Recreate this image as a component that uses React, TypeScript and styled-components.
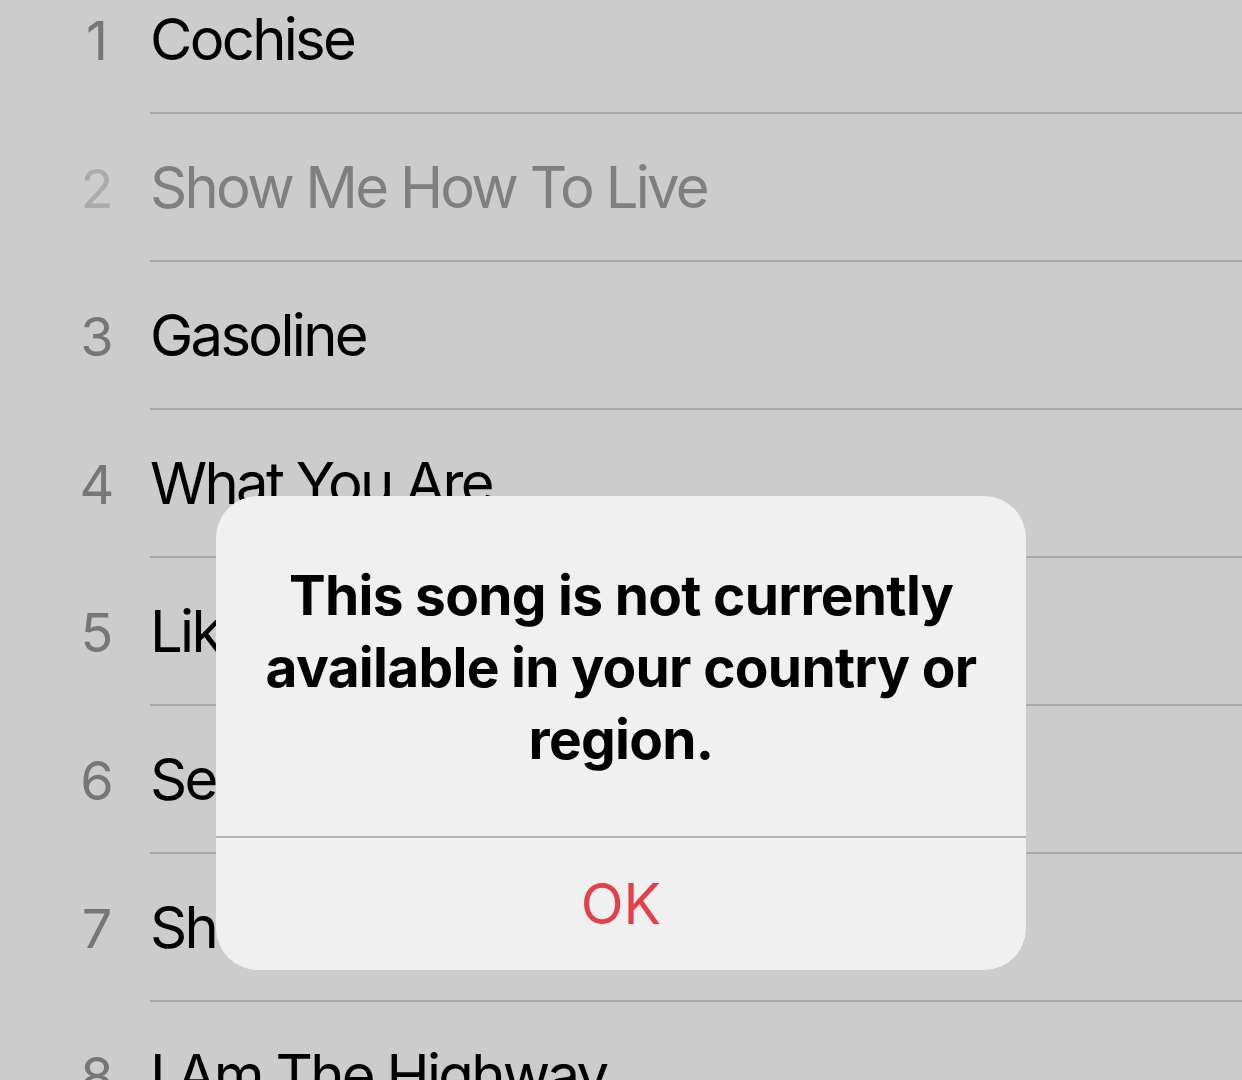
import styled, { createGlobalStyle } from "styled-components";
import { FC } from "react";

const tracks = [
    { n: 1, title: "Cochise", available: true },
    { n: 2, title: "Show Me How To Live", available: false },
    { n: 3, title: "Gasoline", available: true },
    { n: 4, title: "What You Are", available: true },
    { n: 5, title: "Like a Stone", available: true },
    { n: 6, title: "Set It Off", available: true },
    { n: 7, title: "Shadow on the Sun", available: true },
    { n: 8, title: "I Am The Highway", available: true },
];

const App: FC = () => {
    return (
        <Screen>
            <GlobalStyle />
            <TrackList>
                {tracks.map((t) => (
                    <TrackRow key={t.n}>
                        <TrackNumber $dim={!t.available}>{t.n}</TrackNumber>
                        <TrackBody>
                            <TrackTitle $dim={!t.available}>{t.title}</TrackTitle>
                        </TrackBody>
                    </TrackRow>
                ))}
            </TrackList>
            <Alert>
                <AlertMessage>
                    This song is not currently available in your country or region.
                </AlertMessage>
                <AlertButton>OK</AlertButton>
            </Alert>
        </Screen>
    );
};

const GlobalStyle = createGlobalStyle`
    body {
        margin: 0;
        background: #cccccc;
        font-family: Inter, "Noto Sans", sans-serif;
    }
`;

const Screen = styled.div`
    position: relative;
    width: 1242px;
    height: 1080px;
    overflow: hidden;
    background: #cccccc;
`;

const TrackList = styled.div`
    display: flex;
    flex-direction: column;
    margin-top: -34px;
`;

const TrackRow = styled.div`
    display: grid;
    grid-template-columns: 150px 1fr;
    height: 148px;
`;

const TrackNumber = styled.div<{ $dim: boolean }>`
    display: flex;
    align-items: center;
    justify-content: center;
    width: 60px;
    margin-left: 67px;
    font-size: 54px;
    color: ${(p) => (p.$dim ? "#ababab" : "#767676")};
`;

const TrackBody = styled.div`
    display: flex;
    align-items: center;
    border-bottom: 2px solid #a9a9a9;
    box-sizing: border-box;
`;

const TrackTitle = styled.span<{ $dim: boolean }>`
    font-size: 58px;
    letter-spacing: -2.7px;
    color: ${(p) => (p.$dim ? "#7f7f7f" : "#000000")};
`;

const Alert = styled.div`
    position: absolute;
    left: 216px;
    top: 496px;
    width: 810px;
    display: flex;
    flex-direction: column;
    background: #f0f0f0;
    border-radius: 42px;
    overflow: hidden;
`;

const AlertMessage = styled.div`
    padding: 63px 30px 61px;
    text-align: center;
    font-size: 55px;
    font-weight: 700;
    line-height: 72px;
    letter-spacing: -0.7px;
    color: #000000;
    border-bottom: 2px solid #b3b3b3;
`;

const AlertButton = styled.button`
    height: 132px;
    border: none;
    background: transparent;
    font-family: Inter, "Noto Sans", sans-serif;
    font-size: 56px;
    color: #e5404a;
`;

export default App;
